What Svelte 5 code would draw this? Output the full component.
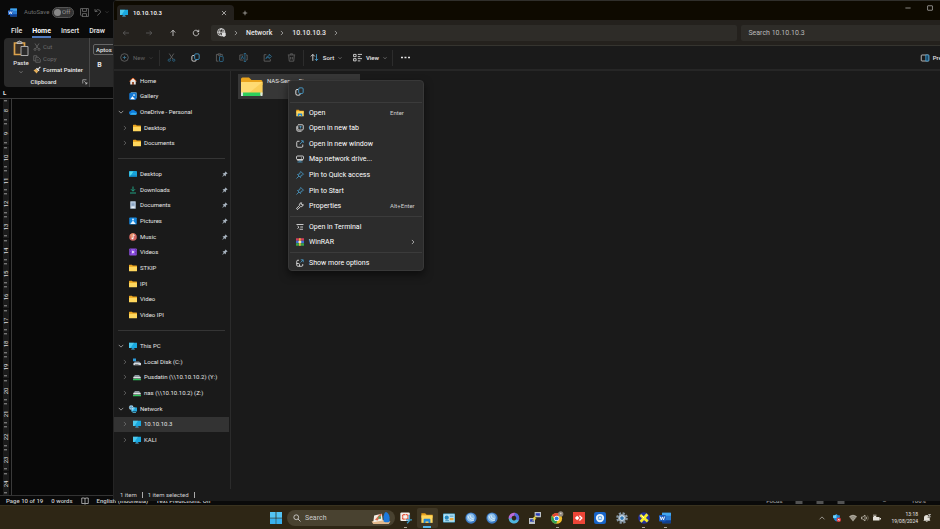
<script>
  const icons = {
    desktop: '<path fill="#19a9e0" d="M0 1.500h16v10.500H0z"/><path fill="#6fe0f7" d="M0 1.500h10L3 12H0z" opacity=".6"/><path fill="#1477b8" d="M6 12h4v2H6z"/><path fill="#58b7dc" d="M4.500 13.500h7V15h-7z"/>',
    desk: '<rect y="2" width="16" height="12" rx="1.500" fill="#17a2d8"/><path fill="#55d8e8" d="M1 3h8l-7 10H1z"/><path fill="#0b5c96" d="M1 11.500h14V13H1z"/>',
    home: '<path fill="#e9e4e1" d="M2.500 7 8 2l5.500 5v8h-4v-5h-3v5h-4z"/><path fill="none" stroke="#e8692b" stroke-width="2" d="M1 8.500 8 2l7 6.500"/><path fill="#b5542a" d="M6.500 10h3v5h-3z"/>',
    gallery: '<rect x="3" y="0.500" width="12.500" height="12.500" rx="1.500" fill="#5aa9e0"/><rect x="0.500" y="2" width="14" height="13.500" rx="1.500" fill="#1479d4"/><path fill="#fff" d="m2.500 14.500 4.500-6 5 6z"/><circle cx="10" cy="6" r="1.700" fill="#fff"/>',
    cloud: '<path fill="#0f7cdb" d="M4 13.500a3.700 3.700 0 0 1-.5-7.400A4.600 4.600 0 0 1 12 6.100 3.700 3.700 0 0 1 12.500 13.500z"/><path fill="#35b1f3" d="M2 13C4 9 9 8 15.800 11c-.5 1.500-1.500 2.500-3 2.500H4z"/>',
    folder: '<path fill="#e9a11b" d="M0 3q0-1.500 1-1.500H6l1.500 1.700h7.500q1 0 1 1V7H0z"/><path fill="#ffd75e" d="M0 5.500h16v8q0 1-1 1H1q-1 0-1-1z"/>',
    download: '<path fill="none" stroke="#20a082" stroke-width="2" d="M8 1v9M4 6.500l4 4 4-4M2 14h12"/>',
    doc: '<rect x="2.500" y="0.500" width="11" height="15" rx="1" fill="#b9cbe0"/><path stroke="#6d8bb0" stroke-width="1.300" d="M5 4.500h6M5 7h6M5 9.500h6"/><path fill="#e9f1f8" d="M5 11h6v3H5z"/>',
    pictures: '<rect x="0.500" y="1" width="15" height="14" rx="1.500" fill="#1686dc"/><path fill="#e7f5ff" d="m2.500 14 5.500-7 5.500 7z"/><circle cx="8" cy="5" r="1.800" fill="#e7f5ff"/>',
    music: '<circle cx="8" cy="8" r="7.600" fill="#cf6560"/><path fill="#e9956d" d="M2 4a7.200 7.200 0 0 1 9-2.500L5 12z"/><path fill="none" stroke="#fff" stroke-width="1.500" d="M8.500 10.500V3.500l3 1.500"/><circle cx="7" cy="10.800" r="1.800" fill="#fff"/>',
    videos: '<rect x="0.500" y="1" width="15" height="14" rx="1.500" fill="#8d4fe0"/><path stroke="#4d2394" stroke-width="1.500" stroke-dasharray="1.500 1.500" d="M3 2v12M13 2v12"/><path fill="#fff" d="m6.500 5 4.500 3-4.500 3z"/>',
    disk: '<path fill="#2d9bdc" d="M0 1h6v5.500H0z"/><path fill="#8a949e" d="M3 7h9l4 3.500V14H1z"/><path fill="#d5dbe0" d="M1 10h15v4.500H1z"/><path fill="#333" d="M4 12h7v1H4z"/>',
    netdisk: '<path fill="#8e979f" d="M4 4h8l3.500 4H.5z"/><path fill="#dfe3e6" d="M.5 8h15v3H.5z"/><path fill="#2fc35c" d="M0 12h16v2.500H0zM6.500 11h3v3h-3z"/>',
    network: '<path fill="#22a7e0" d="M5 5h11v8H5z"/><path fill="#5cc9ef" d="M5 5h8l-6 8H5zM7 14h7v1.500H7z"/><circle cx="4.500" cy="5" r="4.500" fill="#bfe3f5"/><path fill="none" stroke="#3685b5" d="M0 5h9M4.500 .5q-3 4.500 0 9q3-4.500 0-9"/>',
    pin: '<path fill="#aab6c2" d="m9.500 1 5.500 5.500-1.500 1-1-.2-2.500 2.800.2 3-1.200 1.200-3-3L2 15l-1-1 3.700-4L1.700 7 3 5.800l3 .2L8.700 3.500 8.500 2z"/>',
    back: '<path d="M14 8H2.500M7 3.500 2.500 8 7 12.500"/>',
    forward: '<path d="M2 8h11.500M9 3.500 13.500 8 9 12.500"/>',
    up: '<path d="M8 14V2.500M3.500 7 8 2.500 12.500 7"/>',
    refresh: '<path d="M13.500 8A5.500 5.500 0 1 1 11.800 4L13.500 5.500M13.500 1.500v4h-4"/>',
    globe: '<circle cx="7.500" cy="7.500" r="6.500"/><path d="M1 7.500h13M7.500 1q-6 6.500 0 13M7.500 1q4 3 3.500 7"/><path fill="#ddd" stroke="none" d="M8.500 9H15.500v5H8.500zM10 14.500h4V16h-4z"/>',
    chevR: '<path d="m5 2.500 5.500 5.500-5.500 5.500"/>',
    chevD: '<path d="M2 5 8 11l6-6"/>',
    chevU: '<path d="M1.500 11.500 8 5l6.500 6.500"/>',
    plus: '<path d="M8 2v12M2 8h12"/>',
    close: '<path d="m2.500 2.500 11 11M13.500 2.500l-11 11"/>',
    min: '<path d="M1 8h14"/>',
    max: '<rect x="1.500" y="2" width="13" height="12" rx="1"/>',
    new: '<circle cx="8" cy="8" r="6.800"/><path stroke="#3b7390" d="M8 5v6M5 8h6"/>',
    cut: '<path d="m4 1 6.500 10M12 1 5.500 11"/><circle cx="4" cy="12.800" r="2" stroke="#2b6585"/><circle cx="12" cy="12.800" r="2" stroke="#2b6585"/>',
    copy: '<path d="M5.500 4.500H3.500a2 2 0 0 0-2 2v5.500a2.500 2.500 0 0 0 2.500 2.500h3a2.500 2.500 0 0 0 2.500-2.500"/><rect x="6.500" y="1.500" width="8" height="10" rx="2" stroke="#4ba3d3"/>',
    paste: '<path d="M6 14.500H2.500v-12h3M10 2.500h3V5M5.500 1.500h4.500v2.500H5.500z"/><rect x="8" y="6" width="6.500" height="9" rx="1" stroke="#2f6f93"/>',
    rename: '<path d="M8 3.500H1.500v9H8M12.500 3.500h2v9h-2"/><path stroke="#2f6f93" d="M10.500 1v14M8.500 1h4M8.500 15h4M4 10.500l2-5 2 5"/>',
    share: '<path d="M6 3H2v11.500h11V11"/><path stroke="#2f6f93" d="M5 10q1-5 6-5V2l4 4-4 4V7.500q-4 0-6 2.500z"/>',
    trash: '<path d="M1.500 3.500h13M6 3V1.500h4V3M3 4l1 10.500h8L13 4M6.500 7v4.500M9.500 7v4.500"/>',
    sort: '<path d="M5 14V2.500M1.500 6 5 2.500 8.500 6"/><path stroke="#4ba3d3" d="M11.500 2v11.500M8.500 10.500l3 3 3-3"/>',
    view: '<path d="M1 2.500h4.500v4H1zM1 10h4.500v4H1zM8.500 2.500H16M8.500 6.500H13M8.500 10H16M8.500 14H13"/>',
    dots: '<path stroke="none" fill="#e5e5e5" d="M0 6.500h3.500v3H0zM6.200 6.500h3.500v3H6.200zM12.500 6.500H16v3h-3.500z"/>',
    preview: '<rect x="0.500" y="2" width="15" height="12" rx="1.500"/><path stroke="#4ba3d3" fill="#174766" d="M9.500 2h6v12h-6z"/>',
    openFolder: '<path fill="#e9a11b" d="M.5 1.500h5l2 2h8v4H.5z"/><path fill="#ffd75e" d="M.5 4.500h15v10H.5z"/><path fill="#2286d3" d="M3.500 14.500V10q0-1 1-1h7q1 0 1 1v4.500h-2.500v-2H6v2z"/>',
    newTab: '<path d="M4 1.500h8.500a2 2 0 0 1 2 2V10a2 2 0 0 1-2 2H5.500a2 2 0 0 1-2-2V3M1.500 4.500v7a3 3 0 0 0 3 3H11"/><path stroke="#4ba3d3" d="M9 4v5M6.500 6.500 9 4l2.500 2.500"/>',
    newWin: '<path d="M7 2.500H3.500a2 2 0 0 0-2 2v8a2 2 0 0 0 2 2h8a2 2 0 0 0 2-2V9"/><path stroke="#4ba3d3" d="M10 1.500h4.500V6M14 2 7.500 8.500"/>',
    mapDrive: '<rect x="1" y="2" width="14" height="7" rx="2"/><path d="M10 6h2M3 9v1.500h10V9"/><path stroke="#4ba3d3" d="M8 10.500V14M3 14h10"/>',
    ctxPin: '<path stroke="#4ba3d3" d="m9.500 1 5.500 5.500-2.500 1.500-2.500.8-1 4.200-6-6L7.200 6 8 3.500zM6 10l-5 5"/>',
    wrench: '<path d="M14.200 4.500a3.800 3.800 0 0 1-5 4.500L4 14.300a1.500 1.500 0 0 1-2.200-2.200L7 6.800A3.800 3.800 0 0 1 11.500 1.800L9.500 4 12 6.500z"/>',
    terminal: '<path d="M1 3h14M3 6l3 2.500L3 11M7 12.500h7M8.500 8h5.500"/>',
    winrar: '<path fill="#d13f5b" d="M0 .5h16v5H0z"/><path fill="#3c69d1" d="M0 5.500h16v5H0z"/><path fill="#39a548" d="M0 10.500h16v5H0z"/><path fill="#e8b23a" d="M6 .5h3.500v15H6z"/><path fill="#f4e6bd" d="M5 6h5.500v4H5z"/>',
    more: '<path d="M6 2.500H3.500a2 2 0 0 0-2 2v8a2 2 0 0 0 2 2h8a2 2 0 0 0 2-2V10M1.500 9H5a2 2 0 0 1 2 2v3.500"/><path stroke="#4ba3d3" d="M9.500 1.500h5v5M14 2 9 7"/>',
    word: '<rect x="4" y="1" width="12" height="14" rx="1" fill="#2b7cd3"/><path fill="#41a5ee" d="M4 1h12v4H4z"/><path fill="#103f91" d="M4 11h12v4H4z"/><rect y="4" width="9" height="8.500" rx="1" fill="#185abd"/><path fill="none" stroke="#fff" stroke-width="1.200" d="m1.500 6 1.500 4.500L4.500 6.500 6 10.500 7.500 6"/>',
    save: '<path d="M1 1h14v14H3.500L1 12.500zM4.500 1.500V6h7V1.500M4.500 15v-5h7v5"/>',
    undo: '<path d="M2 2v5h5M2.500 6.500Q7 1 11.500 4.500T10 12l-3.500 3"/>',
    clipboard: '<path fill="#3a3027" stroke="#dba24c" stroke-width="1.700" d="M1.500 3h10v11.500h-10z"/><path fill="#777" stroke="#bbb" d="M4 3.500V2h1q1.500-2 3 0h1v1.500z"/><path fill="#2b2b2b" stroke="#aaa" d="M8 6.500h7v9H8z"/>',
    cutG: '<path d="m4 1 6.500 10M12 1 5.500 11"/><circle cx="4" cy="12.800" r="2"/><circle cx="12" cy="12.800" r="2"/>',
    copyG: '<path d="M5 11.500H1.500v-10h6V4M5.500 4.500h5l4 4v6h-9zM7.500 10h4"/>',
    brush: '<path fill="#e3ad58" d="m1 9 5-3.500 4.500 5L7 15q-2-3-6-6z"/><path fill="#eee" d="m6 5.500 2-2 5 5-2 2zM10 5l4-4 1.500 1.500-4 4z"/>',
    launcher: '<path d="M2 12V2h10M6 6l7 7M13 8v5H8"/>',
    book: '<path d="M8 3v11M1.500 2H6q2 0 2 1.500Q8 2 10 2h4.500v11H10q-2 0-2 1.500Q8 13 6 13H1.500z"/>',
    start: '<path fill="#53c4f5" d="M0 0h7.500v7.500H0zM8.500 0H16v7.500H8.500zM0 8.500h7.500V16H0zM8.500 8.500H16V16H8.500z"/><path fill="#1f9be8" opacity=".5" d="M0 8.500h7.500V16H0zM8.500 8.500H16V16H8.500z"/>',
    search: '<circle cx="6.500" cy="6.500" r="4.800"/><path d="m10 10 5 5"/>',
    snip: '<rect x="0.500" y="0.500" width="12.500" height="11.500" rx="1.500" fill="#f5f0ec"/><path fill="none" stroke="#e4573d" stroke-width="1.800" stroke-dasharray="2.500 .8" d="M3.500 9.500v-6H10.500V9.500z"/><path fill="none" stroke="#3b9bc8" stroke-width="1.800" d="M12.500 4v7M8 10.500h8M9.500 15l4-4.500"/>',
    panel: '<rect y="2" width="16" height="12" rx="1" fill="#4fb5e2"/><path fill="#b9e2f3" d="M1 3h14v10H1z"/><circle cx="5" cy="7.500" r="2.800" fill="#2487bd"/><path fill="#e7a941" d="M9 8h5v3H9z"/><path stroke="#277fab" d="M9 5.500h5M3 11.500h5"/>',
    dial: '<circle cx="8" cy="8" r="7.500" fill="#3c7bc6"/><circle cx="7.500" cy="7.500" r="5.500" fill="#8fc2ec"/><path fill="none" stroke="#dceefa" stroke-width="1.200" d="M4 5q1 7 8 6M6.500 4q0 5 5 5"/>',
    loop: '<path fill="none" stroke="#ba6ad8" stroke-width="4" d="M3 9A5 5 0 0 1 9 3"/><path fill="none" stroke="#5369dd" stroke-width="4" d="M9 3a5 5 0 0 1 3 8"/><path fill="none" stroke="#4eb5df" stroke-width="4" d="M12.500 10.500a5 5 0 0 1-9.500-2"/>',
    putty: '<path fill="#bbc1c7" d="M7.500 0H16v7H7.500zM0 8h8v8H0z"/><path fill="#2438b8" d="M9 1.500h5.500V5H9zM1.500 9.500h5V13h-5z"/><path fill="#f1dc36" d="m11 4-6 4 2 1-4 4 7-4-2-1z"/>',
    chrome: '<circle cx="7.500" cy="8.500" r="7.300" fill="#f3bf2a"/><path fill="#e14737" d="M7.500 8.500 1.200 4.800A7.300 7.300 0 0 1 13.800 5H7.500z"/><path fill="#31a354" d="M1.200 4.800 5 11l3.500 0-1.500 4.800A7.300 7.300 0 0 1 1.200 4.800z"/><circle cx="7.500" cy="8.500" r="3.500" fill="#fff"/><circle cx="7.500" cy="8.500" r="2.600" fill="#2f7de1"/><circle cx="13" cy="2.500" r="3.500" fill="#8d867e"/><path fill="#d8cfc3" d="M12 1h2v2h-2z"/>',
    anydesk: '<rect width="16" height="16" fill="#ed4537"/><path fill="#fff" d="m2.500 8 3-3 3 3-3 3z"/><path fill="#fff" d="m7.500 5 2-.5L13 8l-3.500 3.500-2-.5 3-3z"/>',
    blue: '<rect width="16" height="16" rx="3" fill="#1764c9"/><circle cx="8" cy="8" r="5.500" fill="#e7f1fb"/><circle cx="8" cy="8" r="3" fill="#6aa9e5"/><path fill="none" stroke="#fff" d="M6.500 8.500 8 6.500l1.500 2z"/>',
    gear: '<circle cx="8" cy="8" r="6.300" fill="none" stroke="#8797a5" stroke-width="3" stroke-dasharray="2.900 2.050"/><circle cx="8" cy="8" r="5.500" fill="#8797a5"/><circle cx="8" cy="8" r="3.600" fill="#e4eef4"/><circle cx="8" cy="8" r="2.500" fill="#2f77b5"/>',
    xic: '<circle cx="8" cy="8" r="7.700" fill="#24309e"/><path stroke="#f5ec28" stroke-width="3.500" d="m3 4 10 8.500M12.500 3l-9 10"/><path stroke="#fff" d="m5 5 3 3"/>',
    shield: '<path fill="#1b87db" d="M0 3q4 0 7-2.500 3 2.500 7 2.500-.5 8-7 12Q0 11 0 3z"/><path fill="#6dd0f7" d="M7 .5v7.500H.5Q0 6 0 3q4 0 7-2.500z"/><circle cx="11.500" cy="11.500" r="4.500" fill="#dc3c42"/><path stroke="#fff" d="m10 10 3 3M13 10l-3 3"/>',
    wifi: '<path fill="#aaa599" stroke="none" d="M0 5q8-7 16 0l-8 10z"/><path stroke="#696353" stroke-width="1" d="M2.500 7.500q5.500-4.500 11 0M5 10.500q3-2.500 6 0"/>',
    volume: '<path stroke="#c9c4b8" d="M1 6v4h2.500L8 14V2L3.500 6zM10.500 5.500q2 2.500 0 5"/><path stroke="#777060" d="M13 3q3.500 5 0 10"/>',
    battery: '<path fill="#e4e1da" stroke="none" d="M0 6h13v7H0zM13.500 8H16v3h-2.500zM1 1h2v3h2V1h1.500v6H1z"/>',
    bell: '<path fill="#e4e1da" stroke="none" d="M2 12V7q0-5 6-5 1.500 0 3 1L9 7h4.500v5l1.500 1.500H.5zM5 14.500h5q-2.500 2.500-5 0z"/><path stroke-width="1.500" d="M10.500 1H15l-4 4.500h4.500"/>',
    ribbon: '<path stroke="none" fill="#999" d="M1 3h14v2H1zM1 7h14v2H1zM1 11h14v2H1z"/>'
  };
  const filled = new Set(['openFolder', 'winrar', 'shield']);

  const places = [
    { icon: 'home', label: 'Home' },
    { icon: 'gallery', label: 'Gallery' },
    { icon: 'cloud', label: 'OneDrive - Personal', open: true },
    { icon: 'folder', label: 'Desktop', child: true },
    { icon: 'folder', label: 'Documents', child: true }
  ];
  const quick = [
    { icon: 'desk', label: 'Desktop', pin: true },
    { icon: 'download', label: 'Downloads', pin: true },
    { icon: 'doc', label: 'Documents', pin: true },
    { icon: 'pictures', label: 'Pictures', pin: true },
    { icon: 'music', label: 'Music', pin: true },
    { icon: 'videos', label: 'Videos', pin: true },
    { icon: 'folder', label: 'STKIP' },
    { icon: 'folder', label: 'IPI' },
    { icon: 'folder', label: 'Video' },
    { icon: 'folder', label: 'Video IPI' }
  ];
  const devices = [
    { icon: 'desktop', label: 'This PC', open: true },
    { icon: 'disk', label: 'Local Disk (C:)', child: true },
    { icon: 'netdisk', label: 'Pusdatin (\\\\10.10.10.2) (Y:)', child: true },
    { icon: 'netdisk', label: 'nas (\\\\10.10.10.2) (Z:)', child: true },
    { icon: 'network', label: 'Network', open: true },
    { icon: 'desktop', label: '10.10.10.3', child: true, selected: true },
    { icon: 'desktop', label: 'KALI', child: true }
  ];
  const menuMain = [
    { icon: 'openFolder', label: 'Open', key: 'Enter' },
    { icon: 'newTab', label: 'Open in new tab' },
    { icon: 'newWin', label: 'Open in new window' },
    { icon: 'mapDrive', label: 'Map network drive...' },
    { icon: 'ctxPin', label: 'Pin to Quick access' },
    { icon: 'ctxPin', label: 'Pin to Start' },
    { icon: 'wrench', label: 'Properties', key: 'Alt+Enter' }
  ];
  const menuApps = [
    { icon: 'terminal', label: 'Open in Terminal' },
    { icon: 'winrar', label: 'WinRAR', sub: true }
  ];
  const menuMore = [{ icon: 'more', label: 'Show more options' }];
  const fileTools = [
    ['cut', 'Cut'], ['copy', 'Copy'], ['paste', 'Paste'],
    ['rename', 'Rename'], ['share', 'Share'], ['trash', 'Delete']
  ];
  const apps = [
    { icon: 'snip', name: 'Snipping Tool', running: true },
    { icon: 'openFolder', name: 'File Explorer', active: true },
    { icon: 'panel', name: 'Control Panel' },
    { icon: 'dial', name: 'Remote client' },
    { icon: 'dial', name: 'Remote client 2' },
    { icon: 'loop', name: 'Copilot' },
    { icon: 'putty', name: 'PuTTY' },
    { icon: 'chrome', name: 'Chrome', running: true },
    { icon: 'anydesk', name: 'AnyDesk' },
    { icon: 'blue', name: 'Scanner' },
    { icon: 'gear', name: 'Settings' },
    { icon: 'xic', name: 'MobaXterm', running: true },
    { icon: 'word', name: 'Word', running: true }
  ];
  const rulerMarks = [8, 9, 10, 11, 12, 13, 14, 15, 16, 17, 18, 19, 20, 21, 22, 23, 24];
</script>

{#snippet icon(name, size = 's8')}
  <svg class="icon {size}" class:filled={filled.has(name)} viewBox="0 0 16 16" aria-hidden="true">{@html icons[name]}</svg>
{/snippet}

{#snippet tree(rows, kind)}
  <ul class="tree {kind}">
    {#each rows as row}
      <li>
        <a href="#top" class:child={row.child} class:selected={row.selected}>
          <span class="twist" class:dim={row.child}>
            {#if row.open}{@render icon('chevD', 's6')}{:else if row.child}{@render icon('chevR', 's6')}{/if}
          </span>
          {@render icon(row.icon)}
          <span class="label">{row.label}</span>
          {#if row.pin}{@render icon('pin', 's6')}{/if}
        </a>
      </li>
    {/each}
  </ul>
{/snippet}

{#snippet menuGroup(rows, kind)}
  <div class="group {kind}" role="group">
    {#each rows as row}
      <button class="item" role="menuitem">
        {@render icon(row.icon)}
        <span>{row.label}</span>
        {#if row.key}<kbd>{row.key}</kbd>{/if}
        {#if row.sub}<i class="sub">{@render icon('chevR', 's6')}</i>{/if}
      </button>
    {/each}
  </div>
{/snippet}

<div class="screen">
  <div class="stage">
    <section class="word" aria-label="Word">
      <header class="wtitle">
        {@render icon('word', 's9')}
        <label class="auto">AutoSave<span class="toggle"><input type="checkbox" /><i></i>Off</span></label>
        <button aria-label="Save">{@render icon('save', 's9')}</button>
        <button aria-label="Undo" class="undo">{@render icon('undo')}{@render icon('chevD', 's4')}</button>
      </header>
      <nav class="wtabs">
        <a href="#top">File</a><a href="#top" class="on">Home</a><a href="#top">Insert</a><a href="#top">Draw</a>
      </nav>
      <div class="ribbon">
        <div class="clip">
          <button class="pastebtn">{@render icon('clipboard', 's16')}<span>Paste</span>{@render icon('chevD', 's4')}</button>
          <div class="cliplist">
            <button disabled>{@render icon('cutG')}Cut</button>
            <button disabled>{@render icon('copyG')}Copy</button>
            <button>{@render icon('brush')}Format Painter</button>
          </div>
          <div class="clipname">Clipboard</div>
          <button class="launch" aria-label="Clipboard options">{@render icon('launcher', 's6')}</button>
        </div>
        <div class="font">
          <input aria-label="Font" value="Aptos" />
          <button><b>B</b></button>
        </div>
      </div>
      <div class="hruler"><b>L</b></div>
      <div class="page">
        <div class="vruler">
          {#each rulerMarks as n}<span>{n}</span>{/each}
        </div>
      </div>
      <footer class="wstatus">
        <span>Page 10 of 19</span><span>0 words</span>{@render icon('book')}<span>English (Indonesia)</span><span>Text Predictions: On</span>
        <span class="right"><span>Focus</span>{@render icon('ribbon')}{@render icon('ribbon')}{@render icon('ribbon')}<span class="zoomctl">–</span><span>100%</span></span>
      </footer>
    </section>

    <section class="explorer" aria-label="File Explorer">
      <header class="tabs">
        <div class="tab">
          {@render icon('desktop')}
          <span>10.10.10.3</span>
          <button aria-label="Close tab">{@render icon('close', 's6')}</button>
        </div>
        <button class="addtab" aria-label="New tab">{@render icon('plus', 's6')}</button>
        <div class="caption">
          <button aria-label="Minimize">{@render icon('min', 's6')}</button>
          <button aria-label="Maximize">{@render icon('max', 's6')}</button>
        </div>
      </header>
      <div class="nav">
        <div class="arrows">
          <button class="dim" aria-label="Back">{@render icon('back')}</button>
          <button class="dim" aria-label="Forward">{@render icon('forward')}</button>
          <button aria-label="Up">{@render icon('up')}</button>
          <button aria-label="Refresh">{@render icon('refresh')}</button>
        </div>
        <div class="address">
          {@render icon('globe', 's9')}
          {@render icon('chevR', 's6')}
          <a href="#top">Network</a>
          {@render icon('chevR', 's6')}
          <a href="#top">10.10.10.3</a>
          {@render icon('chevR', 's6')}
        </div>
        <input class="find" aria-label="Search 10.10.10.3" placeholder="Search 10.10.10.3" />
      </div>
      <div class="tools">
        <button class="dim new">{@render icon('new', 's9')}<span>New</span>{@render icon('chevD', 's4')}</button>
        <div class="files">
          {#each fileTools as [name, label]}
            <button class:dim={name !== 'copy'} aria-label={label}>{@render icon(name, 's9')}</button>
          {/each}
        </div>
        <button class="drop">{@render icon('sort', 's9')}<span>Sort</span>{@render icon('chevD', 's4')}</button>
        <button class="drop">{@render icon('view', 's9')}<span>View</span>{@render icon('chevD', 's4')}</button>
        <button class="dots" aria-label="More">{@render icon('dots', 's9')}</button>
        <button class="prev">{@render icon('preview')}<span>Preview</span></button>
      </div>
      <div class="body">
        <nav class="side">
          {@render tree(places, 'five')}
          <hr />
          {@render tree(quick, 'ten')}
          <hr />
          {@render tree(devices, 'seven')}
        </nav>
        <main>
          <button class="file">
            <svg class="share" viewBox="0 0 22 20" aria-hidden="true">
              <path fill="#eaa41d" d="M0 2q0-1.500 1.500-1.500H8L10.500 3H20q1.500 0 1.500 1.500V8H0z" />
              <path fill="#ffdb73" d="M0 5h21.500v12q0 1-1 1H1q-1 0-1-1z" />
              <path fill="#f6c23f" d="M21.500 5v11H8z" opacity=".5" />
              <path fill="#2fcf5d" d="M2 15.500h17.500V19H2z" />
              <path fill="#d9e6df" d="M0 15.500h2V19H0zM19.500 15.500h2V19h-2z" />
            </svg>
            <span>NAS-Server Fi</span>
          </button>
        </main>
      </div>
      <footer class="status"><span>1 item</span><span>1 item selected</span></footer>
    </section>

    <div class="menu" role="menu">
      <button class="quickcopy" aria-label="Copy">{@render icon('copy', 's9')}</button>
      {@render menuGroup(menuMain, 'main')}
      {@render menuGroup(menuApps, 'apps')}
      {@render menuGroup(menuMore, 'more')}
    </div>
  </div>

  <footer class="taskbar">
    <div class="center">
      <button class="start" aria-label="Start">{@render icon('start', 's12')}</button>
      <label class="search">
        {@render icon('search')}
        <input aria-label="Search" placeholder="Search" />
        <svg class="art" viewBox="0 0 22 14" aria-hidden="true">
          <path fill="#e2b98c" d="M0 11q10-4 22 0l-2 3H2z" />
          <path fill="#f3eee6" d="m3 4 9-2 1 8-11 2z" />
          <path fill="#de6c4b" d="m4 9 6-7 2 1-5 7z" />
          <path fill="#4f9d67" d="M8 5h3v3H8z" />
          <path fill="#1c79dc" d="M14 5q1-5 3-5 3 1 4 6v5q-3 2-7 0z" />
        </svg>
      </label>
      <div class="pinned">
        {#each apps as app}
          <button class:active={app.active} class:running={app.running} aria-label={app.name}>{@render icon(app.icon, 's12')}</button>
        {/each}
      </div>
    </div>
    <div class="tray">
      {@render icon('chevU', 's6')}
      {@render icon('shield')}
      <span class="sys">{@render icon('wifi')}{@render icon('volume')}{@render icon('battery')}</span>
      <time>13:18<br />19/08/2024</time>
      {@render icon('bell')}
    </div>
  </footer>
</div>

<style>
  :global(body) { margin: 0; background: #050505; }
  .screen {
    height: 100vh; display: flex; flex-direction: column; overflow: hidden;
    font: 6px/8px Roboto, "Noto Sans", sans-serif; color: #e6e6e6; background: #050505;
  }
  .screen :global(*) { box-sizing: border-box; }
  button, input { font: inherit; color: inherit; background: none; border: 0; padding: 0; margin: 0; outline: 0; }
  button { display: flex; align-items: center; justify-content: center; white-space: nowrap; }
  a { color: inherit; text-decoration: none; }
  .icon { flex: none; display: block; fill: none; stroke: none; overflow: visible; }
  .s4 { width: 4px; height: 4px; }
  .s6 { width: 6px; height: 6px; }
  .s8 { width: 8px; height: 8px; }
  .s9 { width: 9px; height: 9px; }
  .s12 { width: 12px; height: 12px; }
  .s16 { width: 16px; height: 16px; }
  .nav .icon, .tools .icon, .caption .icon, .addtab .icon, .tab button .icon, .twist .icon, .menu .icon,
  .wtitle button .icon, .pastebtn .s4, .cliplist button:disabled .icon, .launch .icon, .wstatus .icon,
  .search > .icon, .tray .icon { stroke: currentColor; stroke-width: 1.5; }
  .menu .icon.filled, .tray .icon.filled { stroke: none; }
  .stage { flex: 1; position: relative; min-height: 0; }

  .word { position: absolute; inset: 0; display: flex; flex-direction: column; background: #0a0a0a; }
  .wtitle { display: flex; align-items: center; height: 24px; padding-left: 8px; color: #707070; }
  .auto { display: flex; align-items: center; gap: 3px; margin: 0 6px 0 7px; }
  .toggle { position: relative; display: flex; align-items: center; justify-content: flex-end; width: 22px; height: 11px; padding-right: 3px; border: 1px solid #555; border-radius: 6px; background: #333; color: #999; }
  .toggle input { position: absolute; inset: 0; opacity: 0; }
  .toggle i { position: absolute; left: 1px; top: 1px; width: 7px; height: 7px; border-radius: 50%; background: #888; }
  .undo { margin-left: 5px; gap: 3px; }
  .wtabs { display: flex; height: 14px; padding-left: 11px; gap: 10px; font-size: 7px; font-weight: 500; line-height: 14px; }
  .wtabs .on { font-weight: 700; border-bottom: 2px solid #4f79bf; height: 14px; color: #fff; }
  .ribbon { display: flex; height: 49px; margin-left: 4px; background: #2a2a2a; border-radius: 4px; font-weight: 500; }
  .clip { display: grid; grid-template-columns: 28px 57px; grid-template-rows: 38px 10px; width: 86px; border-right: 1px solid #484848; position: relative; }
  .pastebtn { flex-direction: column; gap: 3px; padding-left: 6px; }
  .cliplist { display: flex; flex-direction: column; padding: 3px 0 0 1px; }
  .cliplist button { height: 12px; justify-content: flex-start; gap: 2px; color: #f0f0f0; }
  .cliplist button:disabled { color: #6c6c6c; font-weight: 400; }
  .clipname { grid-column: 1 / 3; text-align: center; padding-right: 6px; line-height: 12px; }
  .launch { position: absolute; right: 1px; bottom: 2px; }
  .font { padding: 6px 0 0 3px; }
  .font input { width: 60px; height: 11px; padding-left: 2px; border: 1px solid #666; border-radius: 2px; }
  .font button { width: 13px; height: 20px; font-size: 7px; }
  .hruler { height: 12px; border-bottom: 1px solid #3a3a3a; padding-left: 3px; line-height: 12px; }
  .page { flex: 1; min-height: 0; display: flex; background: #080808; }
  .vruler { width: 12px; padding-left: 3px; border-right: 1px solid #3a3a3a; display: flex; flex-direction: column; overflow: hidden; }
  .vruler span { width: 6px; flex: 1; writing-mode: vertical-rl; transform: rotate(180deg); text-align: center; line-height: 6px; color: #ddd; background: linear-gradient(#999, #999) 50% 2px / 3px 1px no-repeat, linear-gradient(#999, #999) 50% 21px / 3px 1px no-repeat, #1b1b1b; }
  .wstatus { display: flex; align-items: center; gap: 8px; height: 10px; padding: 0 14px 0 6px; border-top: 1px solid #333; font-weight: 500; white-space: nowrap; line-height: 9px; color: #ccc; }
  .wstatus .right { display: flex; align-items: center; gap: 13px; margin-left: auto; color: #999; }
  .zoomctl { margin: 0 12px 0 24px; }

  .explorer { position: absolute; left: 113px; right: 0; top: 0; bottom: 4px; display: flex; flex-direction: column; background: #1a1a1a; border-radius: 4px 0 0 4px; overflow: hidden; border-left: 1px solid #242424; }
  .tabs { display: flex; flex: none; height: 20px; padding: 4px 0 0 3px; background: #0e0a00; border-top: 1px solid #302f2b; }
  .tab { display: flex; align-items: center; width: 117px; padding: 0 7px 0 3px; gap: 5px; background: #24211d; border-radius: 4px 4px 0 0; font-weight: 500; color: #fff; }
  .tab button { margin-left: auto; }
  .addtab { width: 22px; }
  .caption { display: flex; align-items: flex-start; margin-left: auto; gap: 16px; padding-right: 7px; }
  .nav { display: flex; flex: none; align-items: center; height: 26px; background: #24211d; border-bottom: 1px solid #35342f; }
  .arrows { display: flex; width: 97px; padding-right: 3px; }
  .arrows button { flex: 1; }
  .dim { color: #646464; }
  .address { flex: 527; display: flex; align-items: center; gap: 7px; height: 16px; padding-left: 6px; background: #2e2c28; border-radius: 2px; font-size: 7px; font-weight: 500; }
  .find { flex: 194; width: 0; height: 16px; margin-left: 4px; padding-left: 7px; background: #2e2c28; border-radius: 2px 0 0 2px; font-size: 7px; }
  .find::placeholder { color: #bbb; opacity: 1; }
  .tools { display: flex; flex: none; align-items: center; height: 25px; border-bottom: 2px solid #262626; overflow: hidden; font-weight: 500; }
  .tools button { height: 16px; }
  .tools button span { margin: 0 4px; }
  .tools .new { width: 46px; border-right: 1px solid #2c2c2c; font-weight: 400; }
  .files { display: flex; width: 144px; border-right: 1px solid #2c2c2c; }
  .files button { flex: 1; }
  .tools .drop { width: 44px; }
  .tools .dots { width: 26px; border-left: 1px solid #2c2c2c; }
  .tools .prev { margin: 0 -18px 0 auto; }
  .body { flex: 1; display: flex; min-height: 0; }
  .side { width: 117px; border-right: 1px solid #2b2b2b; padding-top: 2px; }
  .tree { list-style: none; margin: 0; padding: 0; display: grid; grid-auto-rows: 1fr; }
  .five { height: 78px; }
  .ten { height: 157px; }
  .seven { height: 110px; }
  .tree li { display: flex; }
  .tree a { flex: 1; display: flex; align-items: center; margin-right: 1px; padding: 0 1px 0 4px; white-space: nowrap; }
  .tree a.child { padding-left: 8px; }
  .tree a.selected { background: #333; }
  .twist { width: 11px; }
  .twist.dim { color: #8a8a8a; }
  .label { margin: 0 auto 0 3px; }
  hr { height: 1px; margin: 7px 5px 7px 4px; border: 0; background: #353535; }
  main { flex: 1; padding: 3px 0 0 7px; }
  .file { width: 122px; height: 25px; justify-content: flex-start; align-items: flex-start; padding: 3px; gap: 4px; background: #373737; }
  .share { width: 22px; height: 20px; }
  .status { display: flex; flex: none; height: 12px; align-items: center; padding-left: 6px; color: #d0d0d0; }
  .status span { padding-right: 5px; margin-right: 5px; border-right: 1px solid #aaa; line-height: 6px; }

  .menu { position: absolute; left: 288px; top: 80px; width: 136px; padding: 0 1px; background: #2c2c2c; border: 1px solid #383838; border-radius: 4px; box-shadow: 0 4px 8px #0008; font-size: 7px; color: #fff; }
  .quickcopy { height: 21px; padding-left: 5px; }
  .group { display: grid; grid-auto-rows: 1fr; border-top: 1px solid #3b3b3b; padding: 2px 0; }
  .main { height: 114px; }
  .apps { height: 36px; }
  .more { height: 18px; padding-bottom: 0; }
  .item { display: grid; grid-template-columns: 8px 76px auto; column-gap: 5px; padding-left: 6px; justify-content: start; text-align: left; }
  kbd { font: inherit; font-size: 6px; color: #ccc; }
  .sub { display: flex; padding-left: 20px; }

  .taskbar { flex: none; height: 24px; display: grid; grid-template-columns: 1fr auto 1fr; align-items: center; background: #2e2615; border-top: 1px solid #39321f; }
  .center { grid-column: 2; display: flex; align-items: center; }
  .start { width: 23px; }
  .search { display: flex; align-items: center; width: 108px; height: 16px; padding: 0 3px 0 6px; gap: 4px; background: #494230; border-radius: 8px; }
  .search input { flex: 1; min-width: 0; font-size: 7px; }
  .search input::placeholder { color: #ccc; opacity: 1; }
  .art { width: 22px; height: 12px; }
  .pinned { display: grid; grid-template-columns: repeat(13, 1fr); width: 281px; }
  .pinned button { position: relative; height: 20px; border-radius: 2px; }
  .pinned .active { background: #3f3725; }
  .pinned .active::after, .pinned .running::after { content: ""; position: absolute; bottom: 0; width: 3px; height: 1px; background: #a9a597; }
  .pinned .active::after { width: 8px; height: 2px; background: #55b6e8; }
  .tray { display: flex; align-items: center; justify-content: flex-end; gap: 8px; padding-right: 9px; }
  .sys { display: flex; gap: 4px; }
  time { font-size: 5px; text-align: right; line-height: 7px; margin: 0 -3px 0 2px; }
</style>
